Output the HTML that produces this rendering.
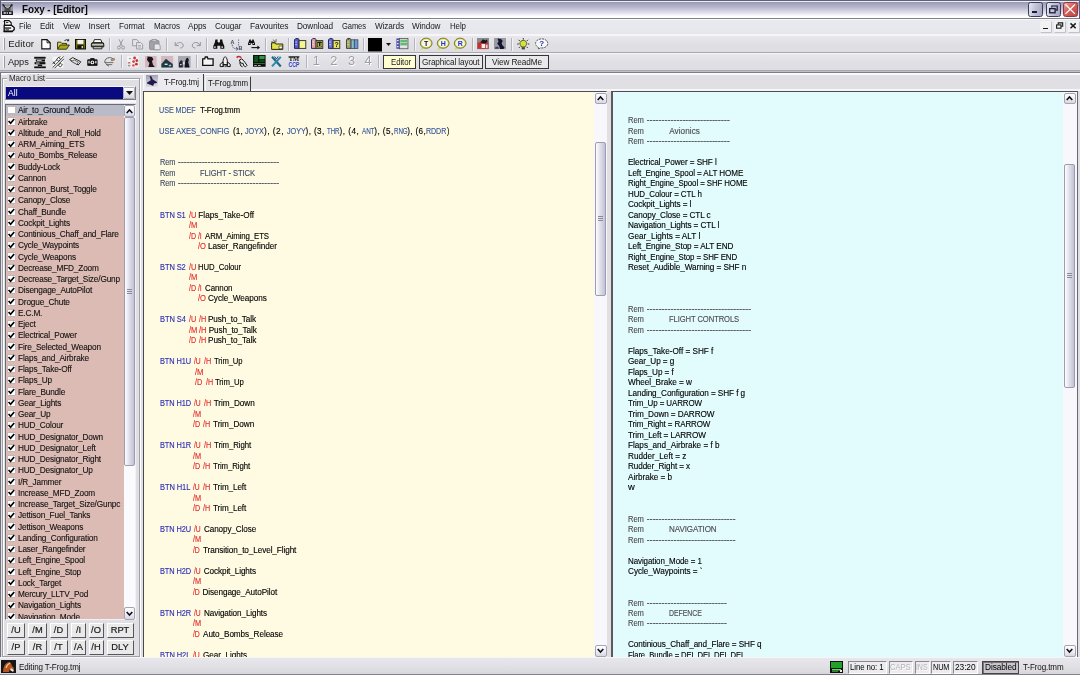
<!DOCTYPE html>
<html><head><meta charset="utf-8"><title>Foxy - [Editor]</title><style>
html,body{margin:0;padding:0}
body{width:1080px;height:675px;position:relative;overflow:hidden;background:#e0dfe3;will-change:transform;
 font-family:"Liberation Sans",sans-serif;font-size:8.25px;color:#000}
div{position:absolute;box-sizing:border-box;white-space:pre}
svg{position:absolute;overflow:visible}
.t{line-height:11px;height:11px}
.m{font-size:8.6px;line-height:11px;color:#1a1a1a}
.li{font-size:8.25px;line-height:11.25px;height:11.25px;left:18px;color:#111;letter-spacing:-0.16px;-webkit-text-stroke:0.1px}
.cb{left:7px;width:8.8px;height:8.3px;background:#fff;border:1px solid #c4b4b4;border-radius:1px}
.ed{font-size:8.2px;line-height:10.5px;height:10.5px;-webkit-text-stroke:0.12px}
.b{color:#2a2cb8}.u{color:#36569c}.r{color:#e22828}.g{color:#3e4a62}.g2{color:#4c4a50}.ds{-webkit-text-stroke:0.25px}
  .btn{background:#e9e9ea;border:1px solid #fff;border-right:1.5px solid #56565c;border-bottom:1.5px solid #56565c;
 font-size:9.3px;line-height:12.5px;text-align:center;color:#1a1a1a;-webkit-text-stroke:0.2px}
.sep{width:1px;background:#b4b4bc;border-right:1px solid #f4f4f6;height:13px;box-sizing:content-box}
</style></head>
<body>
<div style="left:0px;top:0px;width:1080px;height:19.4px;background:linear-gradient(#606078 0px,#606078 0.8px,#eeeefa 1.1px,#eeeefa 1.9px,#9a9ab2 2.5px,#a6a6be 4px,#b4b4cc 7px,#cbcbdc 10px,#e2e2ec 13px,#f8f8fb 15.5px,#ffffff 16.5px,#ffffff 17.6px,#808088 17.9px,#808088 19.4px)"></div>
<div style="left:0px;top:0px;width:0.9px;height:19px;background:#5c5c70"></div>
<svg style="left:1.8px;top:3.6px" width="11" height="11" viewBox="0 0 11 11"><rect width="11" height="11" fill="#92929a"></rect><path d="M0.6 0.4l3.6 3.8M10.4 0.4l-3.6 3.8" stroke="#2a2a2e" stroke-width="1.6"></path><path d="M3 2.2l2.500 1.600 2.500-1.600" stroke="#d8d8dc" stroke-width="0.800" fill="none"></path><rect x="2.600" y="4" width="5.800" height="3.400" fill="#4a4a50"></rect><rect x="0" y="7.200" width="11" height="3.800" fill="#1e1e22"></rect><rect x="1.600" y="8.200" width="2.200" height="1.600" fill="#e0e0e4"></rect><rect x="4.600" y="8.200" width="1.400" height="1.600" fill="#c8c8cc"></rect><rect x="7" y="8.200" width="2.400" height="1.600" fill="#e0e0e4"></rect></svg>
<div class="t" style="left: 21.9px; top: 3.1px; font-weight: bold; font-size: 10.2px; line-height: 13px; color: rgb(10, 10, 10); letter-spacing: -0.1px; transform: scaleX(0.9712); transform-origin: 0px 0px;">Foxy - [Editor]</div>
<div style="left:1028.4px;top:2px;width:15px;height:14.6px;border:1px solid #3c3c5c;border-radius:2.5px;background:linear-gradient(100deg,#e6e6f0,#c4c4d8 45%,#a4a4c2)"></div>
<div style="left:1032.1px;top:11px;width:5.2px;height:2.2px;background:#1c1c38"></div>
<div style="left:1045.6px;top:2px;width:15px;height:14.6px;border:1px solid #3c3c5c;border-radius:2.5px;background:linear-gradient(100deg,#e6e6f0,#c4c4d8 45%,#a4a4c2)"></div>
<svg style="left:1048.6px;top:4.6px" width="9" height="8.6" viewBox="0 0 9 8.600"><path d="M2.800 2.600v-1.600h5.400v4.200h-1.800" fill="none" stroke="#1c1c38" stroke-width="1.200"></path><rect x="0.700" y="3.600" width="5.400" height="4.200" fill="none" stroke="#1c1c38" stroke-width="1.300"></rect></svg>
<div style="left:1063px;top:2px;width:15px;height:14.6px;border:1px solid #8a3a44;border-radius:2.5px;background:linear-gradient(135deg,#f0a49c,#d8645c 40%,#bc4444)"></div>
<svg style="left:1065.4px;top:3.8px" width="10.400" height="10.400" viewBox="0 0 10.400 10.400"><path d="M0.500 0.500l9.400 9.400M9.900 0.500l-9.400 9.400" stroke="#fff" stroke-width="1.300"></path></svg>
<div style="left:1078.6px;top:0px;width:1.4px;height:19px;background:#705878"></div>
<div style="left:0px;top:19.4px;width:1080px;height:15.6px;background:linear-gradient(#e9e9f0,#e6e6ec);border-top:1px solid #fbfbfd;border-bottom:1px solid #f6f6f8"></div>
<svg style="left:3px;top:20.400px" width="12" height="12.400" viewBox="0 0 12 12.400"><path d="M1.600 0.600h4.400l2.200 2.200v2.600h-6.600z" fill="#fff" stroke="#0c0c0c" stroke-width="1.100"></path><path d="M0.600 1.600l1.600 1.200M3 2.600h2.400" stroke="#0c0c0c" stroke-width="0.900"></path><path d="M1.200 5.400h7.400l2.600 2.200v2l-2 1.800h-8z" fill="#fff" stroke="#0c0c0c" stroke-width="1.300"></path><rect x="1.600" y="7.400" width="6.600" height="1.300" fill="#0c0c0c"></rect><rect x="0.600" y="10.600" width="9" height="1.700" fill="#0c0c0c"></rect><rect x="2.400" y="9.400" width="3.600" height="0.900" fill="#0c0c0c"></rect></svg>
<div class="t m" style="left: 19px; top: 21px; letter-spacing: -0.1px; transform: scaleX(0.9213); transform-origin: 0px 0px;">File</div>
<div class="t m" style="left: 40px; top: 21px; letter-spacing: -0.1px; transform: scaleX(0.9506); transform-origin: 0px 0px;">Edit</div>
<div class="t m" style="left: 62.5px; top: 21px; letter-spacing: -0.1px; transform: scaleX(0.9345); transform-origin: 0px 0px;">View</div>
<div class="t m" style="left: 88.5px; top: 21px; letter-spacing: -0.017px;">Insert</div>
<div class="t m" style="left: 119px; top: 21px; letter-spacing: -0.1px; transform: scaleX(0.9542); transform-origin: 0px 0px;">Format</div>
<div class="t m" style="left: 153.5px; top: 21px; letter-spacing: -0.1px; transform: scaleX(0.9388); transform-origin: 0px 0px;">Macros</div>
<div class="t m" style="left: 188px; top: 21px; letter-spacing: -0.1px; transform: scaleX(0.9586); transform-origin: 0px 0px;">Apps</div>
<div class="t m" style="left: 215px; top: 21px; letter-spacing: -0.1px; transform: scaleX(0.957); transform-origin: 0px 0px;">Cougar</div>
<div class="t m" style="left: 250px; top: 21px; letter-spacing: -0.1px; transform: scaleX(0.9815); transform-origin: 0px 0px;">Favourites</div>
<div class="t m" style="left: 297px; top: 21px; letter-spacing: -0.1px; transform: scaleX(0.9594); transform-origin: 0px 0px;">Download</div>
<div class="t m" style="left: 341.5px; top: 21px; letter-spacing: -0.1px; transform: scaleX(0.8786); transform-origin: 0px 0px;">Games</div>
<div class="t m" style="left: 374.5px; top: 21px; letter-spacing: -0.1px; transform: scaleX(0.9523); transform-origin: 0px 0px;">Wizards</div>
<div class="t m" style="left: 412px; top: 21px; letter-spacing: -0.1px; transform: scaleX(0.9474); transform-origin: 0px 0px;">Window</div>
<div class="t m" style="left: 449.5px; top: 21px; letter-spacing: -0.1px; transform: scaleX(0.9197); transform-origin: 0px 0px;">Help</div>
<div style="left:1039.7px;top:20.8px;width:11.2px;height:11.6px;background:#f2f2f4;box-shadow:0.8px 0.8px 0 #b8b8c0"></div>
<div style="left:1053.8px;top:20.8px;width:11.2px;height:11.6px;background:#f2f2f4;box-shadow:0.8px 0.8px 0 #b8b8c0"></div>
<div style="left:1067.6px;top:20.8px;width:11.2px;height:11.6px;background:#f2f2f4;box-shadow:0.8px 0.8px 0 #b8b8c0"></div>
<div style="left:1043px;top:27.8px;width:4.9px;height:1.3px;background:#1a1a1a"></div>
<svg style="left:1055.6px;top:22.4px" width="7.400" height="6.800" viewBox="0 0 7.400 6.800"><path d="M2.200 2.400v-1.500h4.500v3.400h-1.500" fill="none" stroke="#1a1a1a" stroke-width="1.100"></path><rect x="0.600" y="2.900" width="4.400" height="3.300" fill="none" stroke="#1a1a1a" stroke-width="1.100"></rect></svg>
<svg style="left:1070px;top:23.2px" width="6.200" height="5.600" viewBox="0 0 6.200 5.600"><path d="M0.500 0.400l5.200 4.800M5.700 0.400l-5.200 4.800" stroke="#1a1a1a" stroke-width="1.500"></path></svg>
<div style="left:0px;top:35px;width:1080px;height:17.5px;background:linear-gradient(#e8e8ec,#e1e1e5 45%,#dedee2);border-top:1px solid #f6f6f8;border-bottom:1px solid #a8a8b0"></div>
<div style="left:3px;top:38px;width:2px;height:11.5px;background:#f8f8f8;border-right:1px solid #9a9aa4"></div>
<div style="left:0px;top:52.5px;width:1080px;height:18px;background:linear-gradient(#e8e8ec,#e1e1e5 45%,#dedee2);border-top:1px solid #f6f6f8;border-bottom:1px solid #a8a8b0"></div>
<div style="left:3px;top:55.5px;width:2px;height:12px;background:#f8f8f8;border-right:1px solid #9a9aa4"></div>
<div style="left:0px;top:70.6px;width:1080px;height:1px;background:#c0c0c8"></div>
<div style="left:0px;top:71.8px;width:1080px;height:1.4px;background:#7e7e86"></div>
<div style="left:0px;top:73.2px;width:1080px;height:1.4px;background:#fafafc"></div>
<div class="t" style="left: 8.3px; top: 37.8px; font-size: 9.6px; line-height: 12px; color: rgb(34, 34, 34); letter-spacing: 0.14px;">Editor</div>
<div class="t" style="left: 8.3px; top: 55.8px; font-size: 9.6px; line-height: 12px; color: rgb(34, 34, 34); letter-spacing: -0.1px; transform: scaleX(0.9639); transform-origin: 0px 0px;">Apps</div>
<svg style="left:41px;top:39px" width="10" height="10.5" viewBox="0 0 10 10.5"><path d="M0.8 0.6h5.2l3.2 3.2v6.1h-8.4z" fill="#fff" stroke="#111" stroke-width="1.1"></path><path d="M6 0.6v3.2h3.2" fill="none" stroke="#111" stroke-width="0.9"></path></svg>
<svg style="left:57px;top:38.5px" width="13" height="11" viewBox="0 0 13 11"><path d="M0.6 10.2v-7h3.2l1 1.2h4.7v1.8" fill="#d8d860" stroke="#3a3a10" stroke-width="1"></path><path d="M0.6 10.2l2.6-4.2h9.2l-2.8 4.2z" fill="#a8a818" stroke="#3a3a10" stroke-width="1"></path><path d="M7.5 2c1-1.5 2.5-1.7 3.8-0.6M11.6 0.2v1.6h-1.6" fill="none" stroke="#111" stroke-width="0.9"></path></svg>
<svg style="left:75px;top:39px" width="11" height="10.5" viewBox="0 0 11 10.5"><rect x="0.5" y="0.5" width="10" height="9.5" fill="#6e6e08" stroke="#111" stroke-width="1"></rect><rect x="2.4" y="0.9" width="6" height="4" fill="#f4f4f4"></rect><rect x="2.4" y="6.2" width="6.2" height="3.6" fill="#111"></rect><rect x="6.6" y="7" width="1.3" height="2.2" fill="#e8e8e8"></rect></svg>
<svg style="left:91px;top:39px" width="13.2" height="10.5" viewBox="0 0 13.2 10.5"><path d="M3.4 0.6h6.4l1.2 3.2h-8.8z" fill="#fff" stroke="#111" stroke-width="0.9"></path><path d="M1 3.8h11.2l0.6 1.4v2.6h-12.4v-2.6z" fill="#7c7c72" stroke="#111" stroke-width="1"></path><rect x="1.2" y="5.2" width="10.8" height="1" fill="#d8d8c0"></rect><path d="M2.2 7.8h8.8v2h-8.8z" fill="#f0f0e8" stroke="#111" stroke-width="0.9"></path></svg>
<svg style="left:116.5px;top:39px" width="8" height="10.8" viewBox="0 0 8 10.8"><path d="M2 0.3l3.4 7M6 0.3l-3.4 7" stroke="#9494a0" stroke-width="0.9" fill="none"></path><circle cx="1.9" cy="8.6" r="1.5" fill="none" stroke="#9494a0" stroke-width="0.9"></circle><circle cx="6.1" cy="8.6" r="1.5" fill="none" stroke="#9494a0" stroke-width="0.9"></circle></svg>
<svg style="left:132px;top:39px" width="11.5" height="10.5" viewBox="0 0 11.5 10.5"><path d="M0.6 0.6h4.2l1.6 1.6v4.6h-5.8z" fill="#e6e6ea" stroke="#9494a0" stroke-width="0.9"></path><path d="M4.6 3.6h4.2l1.8 1.8v4.6h-6z" fill="#e6e6ea" stroke="#9494a0" stroke-width="0.9"></path><path d="M6 6.5h3M6 8h3" stroke="#9494a0" stroke-width="0.7"></path></svg>
<svg style="left:149px;top:38.5px" width="12" height="11.5" viewBox="0 0 12 11.5"><rect x="0.6" y="1.6" width="9.4" height="9" rx="0.8" fill="#a2a2aa" stroke="#8a8a94" stroke-width="0.9"></rect><rect x="3" y="0.4" width="4.6" height="2.4" fill="#c4c4cc" stroke="#8a8a94" stroke-width="0.7"></rect><path d="M5.2 5h4.2l1.8 1.6v4.2h-6z" fill="#e8e8ec" stroke="#8a8a94" stroke-width="0.8"></path></svg>
<svg style="left:173.5px;top:40.5px" width="10.5" height="7.5" viewBox="0 0 10.5 7.5"><path d="M1.2 1v3.6h3.6" fill="none" stroke="#9494a0" stroke-width="1"></path><path d="M1.6 4.2c1.6-3.4 6.6-3.6 7.6-0.2c0.4 1.8-1 3-3 3" fill="none" stroke="#9494a0" stroke-width="1"></path></svg>
<svg style="left:190.5px;top:40.5px" width="10.5" height="7.5" viewBox="0 0 10.5 7.5"><path d="M9.3 1v3.6h-3.6" fill="none" stroke="#9494a0" stroke-width="1"></path><path d="M8.9 4.2c-1.6-3.4-6.6-3.6-7.6-0.2c-0.4 1.8 1 3 3 3" fill="none" stroke="#9494a0" stroke-width="1"></path></svg>
<svg style="left:213px;top:38.5px" width="11.6" height="10.2" viewBox="0 0 11.6 10.2"><path d="M2.4 0.6h2.2v2.2l0.7 0.8h1l0.7-0.8v-2.2h2.2l0.6 3 1.5 3.4v2.8h-4v-3h-3v3h-4v-2.8l1.5-3.4z" fill="#111"></path><rect x="1.1" y="7.4" width="1.6" height="1.4" fill="#e8e8e8"></rect><rect x="8.4" y="7.4" width="1.6" height="1.4" fill="#e8e8e8"></rect></svg>
<svg style="left:229.5px;top:38.5px" width="13" height="11.5" viewBox="0 0 13 11.5"><text x="0.6" y="4.6" font-family="Liberation Sans,sans-serif" font-size="5.4" font-weight="bold" fill="#3a4660">A</text><text x="8.6" y="11" font-family="Liberation Sans,sans-serif" font-size="5.4" font-weight="bold" fill="#3a4660">B</text><path d="M2.2 5.6c0 3 1.6 4.2 5 4.2" fill="none" stroke="#3a4660" stroke-width="0.9" stroke-dasharray="1.1 0.9"></path><path d="M6.2 8.2l1.9 1.6-1.9 1.5" fill="none" stroke="#3a4660" stroke-width="0.9"></path><path d="M8.6 0.6v1M8.6 3.2v3.6" stroke="#3a4660" stroke-width="1" stroke-dasharray="1 1.2"></path></svg>
<svg style="left:247.5px;top:39px" width="12.5" height="10.5" viewBox="0 0 12.5 10.5"><path d="M1.4 0.4h1.4v1.4h1.4v-1.4h1.4l0.6 2 0.8 2v1.6h-2.6v-1.8h-1.8v1.8h-2.6v-1.6l0.8-2z" fill="#111"></path><rect x="0.9" y="4" width="1" height="0.9" fill="#ddd"></rect><rect x="5" y="4" width="1" height="0.9" fill="#ddd"></rect><path d="M3.4 8.6h7.6" stroke="#111" stroke-width="1.1"></path><path d="M9.4 6.6l2.6 2-2.6 2z" fill="#111"></path></svg>
<svg style="left:270.5px;top:38.5px" width="12.5" height="11.5" viewBox="0 0 12.5 11.5"><path d="M0.6 10.4v-6.6h3l1 1.2h7.2v5.4z" fill="#e2e24a" stroke="#2a2a10" stroke-width="1"></path><path d="M2.2 0.6l2.4 3M5.2 0.2l-0.4 3.2M0.4 2.6l3.6 1.2" stroke="#2a2a10" stroke-width="0.7"></path><rect x="8" y="7" width="3.2" height="2.8" fill="#fafafa" stroke="#2a2a10" stroke-width="0.6"></rect></svg>
<svg style="left:294px;top:38.4px" width="12.4" height="11" viewBox="0 0 12.4 11"><path d="M0.5 1.8l1.2-1.2h2.6l0.8 1.2v8.6h-4.6z" fill="#5a5ad0" stroke="#1a1a4a" stroke-width="0.9"></path><rect x="1.4" y="3.4" width="1.4" height="1.2" fill="#e8e8f8" opacity="0.8"></rect><rect x="1.4" y="6" width="1.4" height="1.2" fill="#e8e8f8" opacity="0.8"></rect><rect x="5.1" y="2.6" width="6.7" height="7.8" fill="#f6f690" stroke="#2a2a2a" stroke-width="0.9"></rect></svg>
<svg style="left:311px;top:38.4px" width="12.4" height="11" viewBox="0 0 12.4 11"><path d="M0.5 1.8l1.2-1.2h2.6l0.8 1.2v8.6h-4.6z" fill="#e4a2a6" stroke="#1a1a4a" stroke-width="0.9"></path><rect x="1.4" y="3.4" width="1.4" height="1.2" fill="#e8e8f8" opacity="0.8"></rect><rect x="1.4" y="6" width="1.4" height="1.2" fill="#e8e8f8" opacity="0.8"></rect><rect x="5.1" y="2.6" width="6.7" height="7.8" fill="#d8d858" stroke="#2a2a2a" stroke-width="0.9"></rect><rect x="6.2" y="3.6" width="4.6" height="5.8" fill="#1a1a1a"></rect><text x="6.6" y="8.8" font-family="Liberation Sans,sans-serif" font-size="6" font-weight="bold" fill="#e8e85a">U</text></svg>
<svg style="left:328.2px;top:38.4px" width="12.4" height="11" viewBox="0 0 12.4 11"><path d="M0.5 1.8l1.2-1.2h2.6l0.8 1.2v8.6h-4.6z" fill="#6a70d8" stroke="#1a1a4a" stroke-width="0.9"></path><rect x="1.4" y="3.4" width="1.4" height="1.2" fill="#e8e8f8" opacity="0.8"></rect><rect x="1.4" y="6" width="1.4" height="1.2" fill="#e8e8f8" opacity="0.8"></rect><rect x="5.1" y="2.6" width="6.7" height="7.8" fill="#e8e860" stroke="#2a2a2a" stroke-width="0.9"></rect><text x="6.6" y="9.2" font-family="Liberation Sans,sans-serif" font-size="7" font-weight="bold" fill="#1a1a1a">?</text></svg>
<svg style="left:345.6px;top:38.4px" width="12.6" height="11" viewBox="0 0 12.6 11"><path d="M0.5 1.8l1.2-1.2h2.6l0.8 1.2v8.6h-4.6z" fill="#a4a474" stroke="#3a3a2a" stroke-width="0.9"></path><rect x="1.6" y="0" width="1.6" height="1.6" fill="#333"></rect><rect x="1.4" y="3.4" width="1.4" height="1.2" fill="#e0d8a0"></rect><rect x="1.4" y="6" width="1.4" height="1.2" fill="#e0d8a0"></rect><rect x="5.1" y="1.8" width="3.2" height="8.6" fill="#8cc0c8" stroke="#3a4a5a" stroke-width="0.8"></rect><rect x="8.3" y="1.8" width="3.6" height="8.6" fill="#6a9ad8" stroke="#3a4a5a" stroke-width="0.8"></rect></svg>
<svg style="left:368px;top:37.5px" width="14" height="13.5" viewBox="0 0 14 13.5"><rect width="14" height="13.5" fill="#000"></rect></svg>
<svg style="left:386px;top:43px" width="5" height="3" viewBox="0 0 5 3"><path d="M0 0h5l-2.5 3z" fill="#111"></path></svg>
<svg style="left:396px;top:38.4px" width="12.4" height="11.2" viewBox="0 0 12.4 11.2"><rect x="0.4" y="0.4" width="3" height="10.4" fill="#4a4ac0"></rect><rect x="1" y="2" width="1.6" height="1.2" fill="#e8e8ff"></rect><rect x="1" y="5" width="1.6" height="1.2" fill="#e8e8ff"></rect><rect x="1" y="8" width="1.6" height="1.2" fill="#e8e8ff"></rect><rect x="3.4" y="0.4" width="8.6" height="10.4" fill="#d0d0d0" stroke="#444" stroke-width="0.7"></rect><rect x="4.4" y="2" width="6.6" height="2.2" fill="#58c070"></rect><rect x="4.4" y="5" width="6.6" height="2.2" fill="#58c070"></rect><rect x="4.4" y="8" width="6.6" height="1.8" fill="#e8e8e8"></rect></svg>
<svg style="left:419.6px;top:38px" width="12.4" height="12" viewBox="0 0 12.4 12"><ellipse cx="6.2" cy="5.2" rx="5.4" ry="4.6" fill="#f4f4f0" stroke="#d8d020" stroke-width="1.2"></ellipse><path d="M2.6 8.6l-1.2 2.8 3-1.6" fill="#f4f4f0" stroke="#d8d020" stroke-width="0.9"></path><ellipse cx="6.2" cy="5.2" rx="5.9" ry="5.1" fill="none" stroke="#222" stroke-width="0.5"></ellipse><text x="6.2" y="7.7" text-anchor="middle" font-family="Liberation Sans,sans-serif" font-size="7" font-weight="bold" fill="#111">T</text></svg>
<svg style="left:437px;top:38px" width="12.4" height="12" viewBox="0 0 12.4 12"><ellipse cx="6.2" cy="5.2" rx="5.4" ry="4.6" fill="#f4f4f0" stroke="#d8d020" stroke-width="1.2"></ellipse><path d="M2.6 8.6l-1.2 2.8 3-1.6" fill="#f4f4f0" stroke="#d8d020" stroke-width="0.9"></path><ellipse cx="6.2" cy="5.2" rx="5.9" ry="5.1" fill="none" stroke="#222" stroke-width="0.5"></ellipse><text x="6.2" y="7.7" text-anchor="middle" font-family="Liberation Sans,sans-serif" font-size="7" font-weight="bold" fill="#2038b0">H</text></svg>
<svg style="left:454px;top:38px" width="12.4" height="12" viewBox="0 0 12.4 12"><ellipse cx="6.2" cy="5.2" rx="5.4" ry="4.6" fill="#f4f4f0" stroke="#d8d020" stroke-width="1.2"></ellipse><path d="M2.6 8.6l-1.2 2.8 3-1.6" fill="#f4f4f0" stroke="#d8d020" stroke-width="0.9"></path><ellipse cx="6.2" cy="5.2" rx="5.9" ry="5.1" fill="none" stroke="#222" stroke-width="0.5"></ellipse><text x="6.2" y="7.7" text-anchor="middle" font-family="Liberation Sans,sans-serif" font-size="7" font-weight="bold" fill="#2038b0">R</text></svg>
<svg style="left:477px;top:38.3px" width="12" height="11.2" viewBox="0 0 12 11.2"><rect width="12" height="11.2" fill="#8a8a92"></rect><path d="M0.6 4.4h10.8v6.4h-10.8z" fill="#c83030"></path><path d="M3 4.6l3-3.4 2.6 1.2 1.4-1.2 0.6 2.6-2.2 1.6z" fill="#1a1a1a"></path><rect x="4.6" y="6" width="3.6" height="4" fill="#f4f0f0"></rect><rect x="9" y="6.6" width="1.6" height="3.6" fill="#f0d8d8"></rect></svg>
<svg style="left:494.3px;top:38.3px" width="12" height="11.2" viewBox="0 0 12 11.2"><rect width="12" height="11.2" fill="#9a9aa4"></rect><path d="M3.4 0.6l3.6 0.4 1.8 2-1.2 2 0.6 2 2.4 2.4-1.2 1.6h-3.4l-0.8-3-2-2.4 1.4-2.2z" fill="#14142c"></path><path d="M1 9.4l3-1 1 2.4h-4z" fill="#3a3a5a"></path></svg>
<svg style="left:517px;top:38px" width="12.6" height="12" viewBox="0 0 12.6 12"><path d="M6.3 0v1.6M1.6 1.8l1.3 1.3M11 1.8l-1.3 1.3M0.2 6h1.6M12.4 6h-1.6M1.8 10l1.2-1.2M10.8 10l-1.2-1.2" stroke="#222" stroke-width="0.9"></path><path d="M6.3 2.4c2.2 0 3.4 1.5 3.4 3.1c0 1.5-1.4 2.2-1.6 3.5h-3.6c-0.2-1.3-1.6-2-1.6-3.5c0-1.6 1.2-3.1 3.4-3.1z" fill="#d6e23a" stroke="#3a3a10" stroke-width="0.8"></path><rect x="4.7" y="9.2" width="3.2" height="2.2" fill="#444"></rect></svg>
<svg style="left:534.5px;top:38px" width="13.4" height="12" viewBox="0 0 13.4 12"><path d="M6.8 0.8c3.4 0 6 2 6 4.6c0 2.6-2.6 4.6-6 4.6c-0.6 0-1.2 0-1.8-0.2l-1.4 1.6-0.4-2.2c-1.6-0.8-2.6-2.2-2.6-3.8c0-2.6 2.8-4.6 6.2-4.600z" fill="#f8f8f8" stroke="#555" stroke-width="1" stroke-dasharray="2.2 0.8"></path><text x="6.8" y="8.2" text-anchor="middle" font-family="Liberation Sans,sans-serif" font-size="8" font-weight="bold" fill="#2030b0">?</text></svg>
<svg style="left:34.4px;top:55.8px" width="12" height="12.4" viewBox="0 0 12 12.4"><rect x="0.2" y="0.8" width="11.4" height="1.9" fill="#111"></rect><rect x="1.800" y="3.400" width="9.200" height="2.200" fill="#111"></rect><rect x="3" y="3.900" width="4.600" height="0.900" fill="#e8e8e8"></rect><rect x="0.600" y="6.100" width="10.800" height="2.200" fill="#111"></rect><rect x="2" y="6.700" width="3.600" height="0.800" fill="#e8e8e8"></rect><rect x="3.800" y="8.500" width="4.400" height="1.600" fill="#111"></rect><rect x="0.200" y="10.400" width="11.600" height="1.800" fill="#111"></rect></svg>
<svg style="left:52px;top:55.8px" width="12" height="12.4" viewBox="0 0 12 12.4"><rect x="0.600" y="0.600" width="10.800" height="11.200" fill="#f6f6f6"></rect><path d="M0.600 11.600l11-11M2.600 12.200l9.200-9.200M0.400 8.200l7.800-7.800" stroke="#111" stroke-width="0.800"></path><path d="M4.600 3.200l2-1.800 2 2-2 1.800zM6.400 9.200l2.200-2 1.800 1.800-2.200 2z" fill="#fff" stroke="#111" stroke-width="0.800"></path><path d="M1 5.600l2 2.400" stroke="#111" stroke-width="0.900"></path></svg>
<svg style="left:69px;top:56.8px" width="12.6" height="8.8" viewBox="0 0 12.6 8.8"><path d="M0.600 2.600l3.200-2 8 4.200-2.600 3.200z" fill="#f4f4f4" stroke="#111" stroke-width="0.9"></path><path d="M2.400 4.400l2.800-1.600 4.200 2.400-1.600 2.200z" fill="#dcdcdc" stroke="#111" stroke-width="0.6"></path></svg>
<svg style="left:87px;top:57.8px" width="10.8" height="8" viewBox="0 0 10.8 8"><path d="M0.700 1.800h2.200l0.800-1.300h3.400l0.800 1.300h2.200v5.600h-9.400z" fill="#111" stroke="#111" stroke-width="0.800"></path><circle cx="5.400" cy="4.400" r="1.900" fill="#f2f2f2"></circle><circle cx="5.400" cy="4.400" r="0.800" fill="#111"></circle><rect x="1.400" y="2.800" width="1.300" height="2.600" fill="#e0e0e0"></rect><rect x="8.200" y="2.800" width="1.300" height="2.600" fill="#e0e0e0"></rect></svg>
<svg style="left:104px;top:56.2px" width="10.8" height="10.5" viewBox="0 0 10.8 10.5"><path d="M0.600 6.600c0-3 2.200-5 5-5c1.600 0 2.800 0.600 3.600 1.600" fill="none" stroke="#555" stroke-width="0.900"></path><path d="M1 6.600h8.400M2.600 8.600h5.600M1.600 6.600c0.400 2 1.600 3.200 3.600 3.400" fill="none" stroke="#555" stroke-width="0.800"></path><path d="M7 3.400l3.200-1.200 0.400 1.800-3 1z" fill="#e89038" stroke="#555" stroke-width="0.500"></path></svg>
<svg style="left:127.3px;top:55.6px" width="11.6" height="11.4" viewBox="0 0 11.6 11.4"><rect width="11.600" height="11.400" fill="#f2f2f4"></rect><circle cx="7.600" cy="2" r="1.400" fill="#d03030"></circle><circle cx="9.800" cy="4.600" r="1.300" fill="#b82828"></circle><circle cx="6.600" cy="5.600" r="1.400" fill="#d84040"></circle><circle cx="9.400" cy="8.200" r="1.400" fill="#c83030"></circle><circle cx="6.400" cy="9.400" r="1.200" fill="#d84848"></circle><circle cx="3" cy="2.600" r="0.700" fill="#555"></circle><rect x="0.800" y="6" width="2.600" height="1.600" fill="#c87878"></rect><rect x="0.800" y="8.800" width="2.600" height="1.600" fill="#a09090"></rect></svg>
<svg style="left:144.6px;top:55.6px" width="11.6" height="11.4" viewBox="0 0 11.6 11.4"><rect width="11.600" height="11.400" fill="#d8b4bc"></rect><path d="M2.600 0.600l4.400 0.400 1.400 2.200-1.400 2 1 3.600 1.800 2.200h-6.400l1-4-2.400-3z" fill="#16161e"></path></svg>
<svg style="left:160.8px;top:55.6px" width="12.2" height="11.4" viewBox="0 0 12.2 11.4"><rect width="12.200" height="11.400" fill="#d4b8c0"></rect><path d="M0.400 11.400v-3.400l4.600-5.200 3 2.400 3.800 2.800v3.400z" fill="#1c3a44"></path><path d="M3.600 7.600h3v1.400h-3z" fill="#d8e4e4"></path><path d="M7.600 9l2.400-0.600 0.400 1.600-2.400 0.400z" fill="#9ac0c0"></path></svg>
<svg style="left:178px;top:55.6px" width="12.6" height="11.4" viewBox="0 0 12.6 11.4"><rect width="12.600" height="11.400" fill="#a8a8b0"></rect><path d="M1 11.400v-5l2.200-2.400 1.600 1.400v6z" fill="#1e2a3a"></path><path d="M6.600 11.400l0.600-6.400 1.200-2.800 1.400-0.400 1 2-0.600 2.400 1.400 5.200z" fill="#14141e"></path><rect x="4.800" y="6" width="1.800" height="2.400" fill="#e0e4e8"></rect><rect x="2" y="8" width="1.600" height="1.200" fill="#c8d0d8"></rect></svg>
<svg style="left:202px;top:56.2px" width="11.8" height="10" viewBox="0 0 11.8 10"><path d="M0.700 9.400v-6.600h2l0.600-1.800h2l0.600 1.800h5.200v6.600z" fill="#f4f4f4" stroke="#111" stroke-width="1.300"></path></svg>
<svg style="left:218.8px;top:55.6px" width="12.4" height="11.4" viewBox="0 0 12.4 11.4"><path d="M6.200 0.600c1.600 1.200 2.200 3 2.200 5.400v2.600h-4.400v-2.600c0-2.400 0.600-4.200 2.200-5.400z" fill="#f0f0f0" stroke="#111" stroke-width="1"></path><path d="M4 6l-2.800 2.200v2.400h2.800zM8.400 6l2.800 2.200v2.400h-2.800z" fill="#f0f0f0" stroke="#111" stroke-width="1"></path><path d="M4.600 9v2M7.800 9v2M6.200 8.600v2.600" stroke="#111" stroke-width="0.800"></path></svg>
<svg style="left:236.4px;top:55.6px" width="11.8" height="11.4" viewBox="0 0 11.8 11.4"><path d="M0.600 1.600c1.400-1.400 3.400-1.400 4.600 0.200" fill="none" stroke="#c82828" stroke-width="1.600"></path><path d="M3.400 4l2.400-1.200 3 3.400 2.200 3.200-1.400 1.400-2-1.200-0.400-2.200-2.600-0.400z" fill="#f4f4f4" stroke="#111" stroke-width="1"></path><path d="M3.600 6.400l1.200 3.600 1.800 0.800" fill="none" stroke="#111" stroke-width="0.900"></path></svg>
<svg style="left:253px;top:55.4px" width="12.6" height="11.8" viewBox="0 0 12.6 11.8"><rect width="12.6" height="11.8" fill="#0c120c"></rect><rect x="1.2" y="1" width="3.8" height="6" fill="#12501c"></rect><rect x="6.4" y="1" width="5.200" height="3.200" fill="#2c9c3e"></rect><rect x="6.400" y="5" width="5.200" height="2" fill="#10481a"></rect><rect x="0.800" y="8.300" width="11" height="0.700" fill="#3a9a44"></rect><rect x="1.200" y="10" width="2.600" height="1" fill="#a8b0a8"></rect><rect x="5" y="10" width="2.600" height="1" fill="#a8b0a8"></rect></svg>
<svg style="left:271.4px;top:55.8px" width="10.8" height="11" viewBox="0 0 10.8 11"><path d="M1 0.800l8.800 9.600" stroke="#1a6a8a" stroke-width="2.200"></path><path d="M9.800 0.800l-8.800 9.600" stroke="#2a8aa8" stroke-width="2"></path><path d="M3.600 0.400l1.800 2.600 1.800-2.600" fill="none" stroke="#0e3a4a" stroke-width="0.900"></path></svg>
<svg style="left:288.3px;top:55.6px" width="12" height="11.4" viewBox="0 0 12 11.4"><text x="6" y="4.600" text-anchor="middle" font-family="Liberation Serif,serif" font-size="5.800" font-weight="bold" fill="#111" textLength="10.500" lengthAdjust="spacingAndGlyphs">TM</text><rect x="0.600" y="0.300" width="10.800" height="1.100" fill="#111"></rect><text x="6" y="10.800" text-anchor="middle" font-family="Liberation Sans,sans-serif" font-size="6.400" font-weight="bold" fill="#2840c8" textLength="11" lengthAdjust="spacingAndGlyphs">CCP</text></svg>

<div class="sep" style="left:109px;top:38px"></div>
<div class="sep" style="left:166px;top:38px"></div>
<div class="sep" style="left:206px;top:38px"></div>
<div class="sep" style="left:265px;top:38px"></div>
<div class="sep" style="left:288px;top:38px"></div>
<div class="sep" style="left:363px;top:38px"></div>
<div class="sep" style="left:414px;top:38px"></div>
<div class="sep" style="left:472px;top:38px"></div>
<div class="sep" style="left:511px;top:38px"></div>
<div class="sep" style="left:121px;top:55px"></div>
<div class="sep" style="left:196px;top:55px"></div>
<div class="sep" style="left:306px;top:55px"></div>
<div class="sep" style="left:378px;top:55px"></div>
<div class="t" style="left:312.8px;top:54.4px;font-size:12.8px;line-height:14px;color:#9e9ea4;text-shadow:0.8px 0.8px 0 #fff">1</div>
<div class="t" style="left:330.3px;top:54.4px;font-size:12.8px;line-height:14px;color:#9e9ea4;text-shadow:0.8px 0.8px 0 #fff">2</div>
<div class="t" style="left:347.9px;top:54.4px;font-size:12.8px;line-height:14px;color:#9e9ea4;text-shadow:0.8px 0.8px 0 #fff">3</div>
<div class="t" style="left:364.4px;top:54.4px;font-size:12.8px;line-height:14px;color:#9e9ea4;text-shadow:0.8px 0.8px 0 #fff">4</div>
<div style="left:383px;top:54.9px;width:33.4px;height:14.5px;background:#ffffd2;border:1px solid #35353a;border-right-width:1.3px;border-bottom-width:1.3px"></div>
<div class="t" style="left: 390.8px; top: 56.6px; font-size: 8.7px; line-height: 11px; color: rgb(26, 26, 26); letter-spacing: -0.1px; transform: scaleX(0.9048); transform-origin: 0px 0px;">Editor</div>
<div style="left:419.2px;top:54.9px;width:63.4px;height:14.5px;background:#e9e9ec;border:1px solid #35353a;border-right-width:1.3px;border-bottom-width:1.3px"></div>
<div class="t" style="left: 421.7px; top: 56.6px; font-size: 8.7px; line-height: 11px; color: rgb(26, 26, 26); letter-spacing: -0.1px; transform: scaleX(0.9398); transform-origin: 0px 0px;">Graphical layout</div>
<div style="left:485px;top:54.9px;width:64.3px;height:14.5px;background:#e9e9ec;border:1px solid #35353a;border-right-width:1.3px;border-bottom-width:1.3px"></div>
<div class="t" style="left: 491.7px; top: 56.6px; font-size: 8.7px; line-height: 11px; color: rgb(26, 26, 26); letter-spacing: -0.1px; transform: scaleX(0.9463); transform-origin: 0px 0px;">View ReadMe</div>
<div style="left:0px;top:72.5px;width:1px;height:585px;background:#70707a"></div>
<div style="left:2px;top:77.5px;width:138px;height:579.5px;border:1px solid #a0a0a8;box-shadow:1px 1px 0 #fff, inset 1px 1px 0 #fff"></div>
<div style="left:7px;top:74px;width:39px;height:8px;background:#e0dfe3"></div>
<div class="t" style="left: 8.6px; top: 72.3px; font-size: 9px; line-height: 12px; color: rgb(42, 42, 42); letter-spacing: -0.1px; transform: scaleX(0.8885); transform-origin: 0px 0px;">Macro List</div>
<div style="left:5px;top:99.8px;width:131.4px;height:3.6px;background:#f8f8fb"></div>
<div style="left:5px;top:85.6px;width:131.4px;height:14.4px;background:#fff;border:1px solid #7c7c86;border-top-color:#f4f4f8;border-left-color:#b4b4c0"></div>
<div style="left:6px;top:87px;width:117px;height:12px;background:#0a0a80"></div>
<div class="t" style="left:8px;top:88px;color:#fff;font-size:8.6px">All</div>
<div style="left:123px;top:87px;width:12px;height:12px;background:linear-gradient(#fdfdfd,#d8d8e0);border:1px solid #b0b0bc;border-radius:1px"></div>
<svg style="left:126px;top:91px" width="7" height="4" viewBox="0 0 7 4"><path d="M0 0h7l-3.5 4z" fill="#111"></path></svg>
<div style="left:5px;top:104px;width:131px;height:516.4px;background:#dbbbb3;border:1px solid #f2f2f6;border-left-color:#6a6a74;border-top-color:#6a6a74;overflow:hidden"></div>
<div style="left:124px;top:105px;width:11px;height:514px;background:#fbfbfd"></div>
<div style="left:6px;top:105px;width:118px;height:514px;overflow:hidden">
<div style="left:0px;top:0px;width:118px;height:11px;background:#b9bbc9"></div>
<div class="cb" style="left:1px;top:1.00px"></div>
<div class="li" style="left:12px;top:0.30px">Air_to_Ground_Mode</div>
<div class="cb" style="left:1px;top:12.25px"></div>
<svg style="left:2.3px;top:13.05px" width="7" height="7" viewBox="0 0 7 7"><path d="M0.6 3l2 2.2 3.6-4.2" fill="none" stroke="#000" stroke-width="1.7"></path></svg>
<div class="li" style="left:12px;top:11.55px">Airbrake</div>
<div class="cb" style="left:1px;top:23.50px"></div>
<svg style="left:2.3px;top:24.30px" width="7" height="7" viewBox="0 0 7 7"><path d="M0.6 3l2 2.2 3.6-4.2" fill="none" stroke="#000" stroke-width="1.7"></path></svg>
<div class="li" style="left:12px;top:22.80px">Altitude_and_Roll_Hold</div>
<div class="cb" style="left:1px;top:34.75px"></div>
<svg style="left:2.3px;top:35.55px" width="7" height="7" viewBox="0 0 7 7"><path d="M0.6 3l2 2.2 3.6-4.2" fill="none" stroke="#000" stroke-width="1.7"></path></svg>
<div class="li" style="left:12px;top:34.05px">ARM_Aiming_ETS</div>
<div class="cb" style="left:1px;top:46.00px"></div>
<svg style="left:2.3px;top:46.80px" width="7" height="7" viewBox="0 0 7 7"><path d="M0.6 3l2 2.2 3.6-4.2" fill="none" stroke="#000" stroke-width="1.7"></path></svg>
<div class="li" style="left:12px;top:45.30px">Auto_Bombs_Release</div>
<div class="cb" style="left:1px;top:57.25px"></div>
<svg style="left:2.3px;top:58.05px" width="7" height="7" viewBox="0 0 7 7"><path d="M0.6 3l2 2.2 3.6-4.2" fill="none" stroke="#000" stroke-width="1.7"></path></svg>
<div class="li" style="left:12px;top:56.55px">Buddy-Lock</div>
<div class="cb" style="left:1px;top:68.50px"></div>
<svg style="left:2.3px;top:69.30px" width="7" height="7" viewBox="0 0 7 7"><path d="M0.6 3l2 2.2 3.6-4.2" fill="none" stroke="#000" stroke-width="1.7"></path></svg>
<div class="li" style="left:12px;top:67.80px">Cannon</div>
<div class="cb" style="left:1px;top:79.75px"></div>
<svg style="left:2.3px;top:80.55px" width="7" height="7" viewBox="0 0 7 7"><path d="M0.6 3l2 2.2 3.6-4.2" fill="none" stroke="#000" stroke-width="1.7"></path></svg>
<div class="li" style="left:12px;top:79.05px">Cannon_Burst_Toggle</div>
<div class="cb" style="left:1px;top:91.00px"></div>
<svg style="left:2.3px;top:91.80px" width="7" height="7" viewBox="0 0 7 7"><path d="M0.6 3l2 2.2 3.6-4.2" fill="none" stroke="#000" stroke-width="1.7"></path></svg>
<div class="li" style="left:12px;top:90.30px">Canopy_Close</div>
<div class="cb" style="left:1px;top:102.25px"></div>
<svg style="left:2.3px;top:103.05px" width="7" height="7" viewBox="0 0 7 7"><path d="M0.6 3l2 2.2 3.6-4.2" fill="none" stroke="#000" stroke-width="1.7"></path></svg>
<div class="li" style="left:12px;top:101.55px">Chaff_Bundle</div>
<div class="cb" style="left:1px;top:113.50px"></div>
<svg style="left:2.3px;top:114.30px" width="7" height="7" viewBox="0 0 7 7"><path d="M0.6 3l2 2.2 3.6-4.2" fill="none" stroke="#000" stroke-width="1.7"></path></svg>
<div class="li" style="left:12px;top:112.80px">Cockpit_Lights</div>
<div class="cb" style="left:1px;top:124.75px"></div>
<svg style="left:2.3px;top:125.55px" width="7" height="7" viewBox="0 0 7 7"><path d="M0.6 3l2 2.2 3.6-4.2" fill="none" stroke="#000" stroke-width="1.7"></path></svg>
<div class="li" style="left:12px;top:124.05px">Continious_Chaff_and_Flare</div>
<div class="cb" style="left:1px;top:136.00px"></div>
<svg style="left:2.3px;top:136.80px" width="7" height="7" viewBox="0 0 7 7"><path d="M0.6 3l2 2.2 3.6-4.2" fill="none" stroke="#000" stroke-width="1.7"></path></svg>
<div class="li" style="left:12px;top:135.30px">Cycle_Waypoints</div>
<div class="cb" style="left:1px;top:147.25px"></div>
<svg style="left:2.3px;top:148.05px" width="7" height="7" viewBox="0 0 7 7"><path d="M0.6 3l2 2.2 3.6-4.2" fill="none" stroke="#000" stroke-width="1.7"></path></svg>
<div class="li" style="left:12px;top:146.55px">Cycle_Weapons</div>
<div class="cb" style="left:1px;top:158.50px"></div>
<svg style="left:2.3px;top:159.30px" width="7" height="7" viewBox="0 0 7 7"><path d="M0.6 3l2 2.2 3.6-4.2" fill="none" stroke="#000" stroke-width="1.7"></path></svg>
<div class="li" style="left:12px;top:157.80px">Decrease_MFD_Zoom</div>
<div class="cb" style="left:1px;top:169.75px"></div>
<svg style="left:2.3px;top:170.55px" width="7" height="7" viewBox="0 0 7 7"><path d="M0.6 3l2 2.2 3.6-4.2" fill="none" stroke="#000" stroke-width="1.7"></path></svg>
<div class="li" style="left:12px;top:169.05px">Decrease_Target_Size/Gunp</div>
<div class="cb" style="left:1px;top:181.00px"></div>
<svg style="left:2.3px;top:181.80px" width="7" height="7" viewBox="0 0 7 7"><path d="M0.6 3l2 2.2 3.6-4.2" fill="none" stroke="#000" stroke-width="1.7"></path></svg>
<div class="li" style="left:12px;top:180.30px">Disengage_AutoPilot</div>
<div class="cb" style="left:1px;top:192.25px"></div>
<svg style="left:2.3px;top:193.05px" width="7" height="7" viewBox="0 0 7 7"><path d="M0.6 3l2 2.2 3.6-4.2" fill="none" stroke="#000" stroke-width="1.7"></path></svg>
<div class="li" style="left:12px;top:191.55px">Drogue_Chute</div>
<div class="cb" style="left:1px;top:203.50px"></div>
<svg style="left:2.3px;top:204.30px" width="7" height="7" viewBox="0 0 7 7"><path d="M0.6 3l2 2.2 3.6-4.2" fill="none" stroke="#000" stroke-width="1.7"></path></svg>
<div class="li" style="left:12px;top:202.80px">E.C.M.</div>
<div class="cb" style="left:1px;top:214.75px"></div>
<svg style="left:2.3px;top:215.55px" width="7" height="7" viewBox="0 0 7 7"><path d="M0.6 3l2 2.2 3.6-4.2" fill="none" stroke="#000" stroke-width="1.7"></path></svg>
<div class="li" style="left:12px;top:214.05px">Eject</div>
<div class="cb" style="left:1px;top:226.00px"></div>
<svg style="left:2.3px;top:226.80px" width="7" height="7" viewBox="0 0 7 7"><path d="M0.6 3l2 2.2 3.6-4.2" fill="none" stroke="#000" stroke-width="1.7"></path></svg>
<div class="li" style="left:12px;top:225.30px">Electrical_Power</div>
<div class="cb" style="left:1px;top:237.25px"></div>
<svg style="left:2.3px;top:238.05px" width="7" height="7" viewBox="0 0 7 7"><path d="M0.6 3l2 2.2 3.6-4.2" fill="none" stroke="#000" stroke-width="1.7"></path></svg>
<div class="li" style="left:12px;top:236.55px">Fire_Selected_Weapon</div>
<div class="cb" style="left:1px;top:248.50px"></div>
<svg style="left:2.3px;top:249.30px" width="7" height="7" viewBox="0 0 7 7"><path d="M0.6 3l2 2.2 3.6-4.2" fill="none" stroke="#000" stroke-width="1.7"></path></svg>
<div class="li" style="left:12px;top:247.80px">Flaps_and_Airbrake</div>
<div class="cb" style="left:1px;top:259.75px"></div>
<svg style="left:2.3px;top:260.55px" width="7" height="7" viewBox="0 0 7 7"><path d="M0.6 3l2 2.2 3.6-4.2" fill="none" stroke="#000" stroke-width="1.7"></path></svg>
<div class="li" style="left:12px;top:259.05px">Flaps_Take-Off</div>
<div class="cb" style="left:1px;top:271.00px"></div>
<svg style="left:2.3px;top:271.80px" width="7" height="7" viewBox="0 0 7 7"><path d="M0.6 3l2 2.2 3.6-4.2" fill="none" stroke="#000" stroke-width="1.7"></path></svg>
<div class="li" style="left:12px;top:270.30px">Flaps_Up</div>
<div class="cb" style="left:1px;top:282.25px"></div>
<svg style="left:2.3px;top:283.05px" width="7" height="7" viewBox="0 0 7 7"><path d="M0.6 3l2 2.2 3.6-4.2" fill="none" stroke="#000" stroke-width="1.7"></path></svg>
<div class="li" style="left:12px;top:281.55px">Flare_Bundle</div>
<div class="cb" style="left:1px;top:293.50px"></div>
<svg style="left:2.3px;top:294.30px" width="7" height="7" viewBox="0 0 7 7"><path d="M0.6 3l2 2.2 3.6-4.2" fill="none" stroke="#000" stroke-width="1.7"></path></svg>
<div class="li" style="left:12px;top:292.80px">Gear_Lights</div>
<div class="cb" style="left:1px;top:304.75px"></div>
<svg style="left:2.3px;top:305.55px" width="7" height="7" viewBox="0 0 7 7"><path d="M0.6 3l2 2.2 3.6-4.2" fill="none" stroke="#000" stroke-width="1.7"></path></svg>
<div class="li" style="left:12px;top:304.05px">Gear_Up</div>
<div class="cb" style="left:1px;top:316.00px"></div>
<svg style="left:2.3px;top:316.80px" width="7" height="7" viewBox="0 0 7 7"><path d="M0.6 3l2 2.2 3.6-4.2" fill="none" stroke="#000" stroke-width="1.7"></path></svg>
<div class="li" style="left:12px;top:315.30px">HUD_Colour</div>
<div class="cb" style="left:1px;top:327.25px"></div>
<svg style="left:2.3px;top:328.05px" width="7" height="7" viewBox="0 0 7 7"><path d="M0.6 3l2 2.2 3.6-4.2" fill="none" stroke="#000" stroke-width="1.7"></path></svg>
<div class="li" style="left:12px;top:326.55px">HUD_Designator_Down</div>
<div class="cb" style="left:1px;top:338.50px"></div>
<svg style="left:2.3px;top:339.30px" width="7" height="7" viewBox="0 0 7 7"><path d="M0.6 3l2 2.2 3.6-4.2" fill="none" stroke="#000" stroke-width="1.7"></path></svg>
<div class="li" style="left:12px;top:337.80px">HUD_Designator_Left</div>
<div class="cb" style="left:1px;top:349.75px"></div>
<svg style="left:2.3px;top:350.55px" width="7" height="7" viewBox="0 0 7 7"><path d="M0.6 3l2 2.2 3.6-4.2" fill="none" stroke="#000" stroke-width="1.7"></path></svg>
<div class="li" style="left:12px;top:349.05px">HUD_Designator_Right</div>
<div class="cb" style="left:1px;top:361.00px"></div>
<svg style="left:2.3px;top:361.80px" width="7" height="7" viewBox="0 0 7 7"><path d="M0.6 3l2 2.2 3.6-4.2" fill="none" stroke="#000" stroke-width="1.7"></path></svg>
<div class="li" style="left:12px;top:360.30px">HUD_Designator_Up</div>
<div class="cb" style="left:1px;top:372.25px"></div>
<svg style="left:2.3px;top:373.05px" width="7" height="7" viewBox="0 0 7 7"><path d="M0.6 3l2 2.2 3.6-4.2" fill="none" stroke="#000" stroke-width="1.7"></path></svg>
<div class="li" style="left:12px;top:371.55px">I/R_Jammer</div>
<div class="cb" style="left:1px;top:383.50px"></div>
<svg style="left:2.3px;top:384.30px" width="7" height="7" viewBox="0 0 7 7"><path d="M0.6 3l2 2.2 3.6-4.2" fill="none" stroke="#000" stroke-width="1.7"></path></svg>
<div class="li" style="left:12px;top:382.80px">Increase_MFD_Zoom</div>
<div class="cb" style="left:1px;top:394.75px"></div>
<svg style="left:2.3px;top:395.55px" width="7" height="7" viewBox="0 0 7 7"><path d="M0.6 3l2 2.2 3.6-4.2" fill="none" stroke="#000" stroke-width="1.7"></path></svg>
<div class="li" style="left:12px;top:394.05px">Increase_Target_Size/Gunpc</div>
<div class="cb" style="left:1px;top:406.00px"></div>
<svg style="left:2.3px;top:406.80px" width="7" height="7" viewBox="0 0 7 7"><path d="M0.6 3l2 2.2 3.6-4.2" fill="none" stroke="#000" stroke-width="1.7"></path></svg>
<div class="li" style="left:12px;top:405.30px">Jettison_Fuel_Tanks</div>
<div class="cb" style="left:1px;top:417.25px"></div>
<svg style="left:2.3px;top:418.05px" width="7" height="7" viewBox="0 0 7 7"><path d="M0.6 3l2 2.2 3.6-4.2" fill="none" stroke="#000" stroke-width="1.7"></path></svg>
<div class="li" style="left:12px;top:416.55px">Jettison_Weapons</div>
<div class="cb" style="left:1px;top:428.50px"></div>
<svg style="left:2.3px;top:429.30px" width="7" height="7" viewBox="0 0 7 7"><path d="M0.6 3l2 2.2 3.6-4.2" fill="none" stroke="#000" stroke-width="1.7"></path></svg>
<div class="li" style="left:12px;top:427.80px">Landing_Configuration</div>
<div class="cb" style="left:1px;top:439.75px"></div>
<svg style="left:2.3px;top:440.55px" width="7" height="7" viewBox="0 0 7 7"><path d="M0.6 3l2 2.2 3.6-4.2" fill="none" stroke="#000" stroke-width="1.7"></path></svg>
<div class="li" style="left:12px;top:439.05px">Laser_Rangefinder</div>
<div class="cb" style="left:1px;top:451.00px"></div>
<svg style="left:2.3px;top:451.80px" width="7" height="7" viewBox="0 0 7 7"><path d="M0.6 3l2 2.2 3.6-4.2" fill="none" stroke="#000" stroke-width="1.7"></path></svg>
<div class="li" style="left:12px;top:450.30px">Left_Engine_Spool</div>
<div class="cb" style="left:1px;top:462.25px"></div>
<svg style="left:2.3px;top:463.05px" width="7" height="7" viewBox="0 0 7 7"><path d="M0.6 3l2 2.2 3.6-4.2" fill="none" stroke="#000" stroke-width="1.7"></path></svg>
<div class="li" style="left:12px;top:461.55px">Left_Engine_Stop</div>
<div class="cb" style="left:1px;top:473.50px"></div>
<svg style="left:2.3px;top:474.30px" width="7" height="7" viewBox="0 0 7 7"><path d="M0.6 3l2 2.2 3.6-4.2" fill="none" stroke="#000" stroke-width="1.7"></path></svg>
<div class="li" style="left:12px;top:472.80px">Lock_Target</div>
<div class="cb" style="left:1px;top:484.75px"></div>
<svg style="left:2.3px;top:485.55px" width="7" height="7" viewBox="0 0 7 7"><path d="M0.6 3l2 2.2 3.6-4.2" fill="none" stroke="#000" stroke-width="1.7"></path></svg>
<div class="li" style="left:12px;top:484.05px">Mercury_LLTV_Pod</div>
<div class="cb" style="left:1px;top:496.00px"></div>
<svg style="left:2.3px;top:496.80px" width="7" height="7" viewBox="0 0 7 7"><path d="M0.6 3l2 2.2 3.6-4.2" fill="none" stroke="#000" stroke-width="1.7"></path></svg>
<div class="li" style="left:12px;top:495.30px">Navigation_Lights</div>
<div class="cb" style="left:1px;top:507.25px"></div>
<svg style="left:2.3px;top:508.05px" width="7" height="7" viewBox="0 0 7 7"><path d="M0.6 3l2 2.2 3.6-4.2" fill="none" stroke="#000" stroke-width="1.7"></path></svg>
<div class="li" style="left:12px;top:506.55px">Navigation_Mode</div>
</div>
<div style="left:124.4px;top:105.4px;width:11px;height:11.8px;background:linear-gradient(#ffffff,#ececf4 60%,#d6d6e2);border:1px solid #a4a4b4;border-radius:2px"></div>
<svg style="left:126.4px;top:108.80000000000001px" width="7" height="5" viewBox="0 0 7 5"><path d="M0.7 4l2.8-3 2.8 3" fill="none" stroke="#111" stroke-width="1.6"></path></svg>
<div style="left:124.4px;top:117.4px;width:10.8px;height:349px;background:linear-gradient(90deg,#ffffff,#e4e4ee 40%,#c2c2d4);border:1px solid #9c9cb0;border-radius:2px"></div>
<div style="left:127.4px;top:288.9px;width:4.800000000000001px;height:1px;background:#8a8a9c"></div>
<div style="left:127.4px;top:290.9px;width:4.800000000000001px;height:1px;background:#8a8a9c"></div>
<div style="left:127.4px;top:292.9px;width:4.800000000000001px;height:1px;background:#8a8a9c"></div>
<div style="left:124.2px;top:607.4px;width:11.2px;height:12.4px;background:linear-gradient(#ffffff,#ececf4 60%,#d6d6e2);border:1px solid #a4a4b4;border-radius:2px"></div>
<svg style="left:126.3px;top:611.1px" width="7" height="5" viewBox="0 0 7 5"><path d="M0.7 1l2.8 3 2.8-3" fill="none" stroke="#111" stroke-width="1.6"></path></svg>
<div class="btn" style="left:7px;top:623px;width:18px;height:15px;">/U</div>
<div class="btn" style="left:28px;top:623px;width:19px;height:15px;">/M</div>
<div class="btn" style="left:49.5px;top:623px;width:18px;height:15px;">/D</div>
<div class="btn" style="left:71px;top:623px;width:15px;height:15px;">/I</div>
<div class="btn" style="left:88.5px;top:623px;width:15px;height:15px;">/O</div>
<div class="btn" style="left:106.5px;top:623px;width:27px;height:15px;">RPT</div>
<div class="btn" style="left:7px;top:639.5px;width:18px;height:15px;">/P</div>
<div class="btn" style="left:28px;top:639.5px;width:19px;height:15px;">/R</div>
<div class="btn" style="left:49.5px;top:639.5px;width:18px;height:15px;">/T</div>
<div class="btn" style="left:71px;top:639.5px;width:15px;height:15px;">/A</div>
<div class="btn" style="left:88.5px;top:639.5px;width:15px;height:15px;">/H</div>
<div class="btn" style="left:106.5px;top:639.5px;width:27px;height:15px;">DLY</div>
<div style="left:143px;top:74.4px;width:61px;height:16.6px;background:#ebebef;border-left:1px solid #f8f8f8;border-right:1.4px solid #3c3c44"></div>
<div style="left:146.1px;top:75.2px;width:12px;height:11.8px;background:linear-gradient(170deg,#9a9aac,#c2c2d0 50%,#e2e2ea)"></div>
<svg style="left:146.1px;top:75.2px" width="12" height="11.800" viewBox="0 0 12 11.800"><path d="M3.600 0.800l1.800 0.600 1.400 3.200 4.200 2.400-0.200 1-2.800 0.600-0.800 2.400-1.600-0.800-4.600-1.600 0.200-1.200 3.600-2.200z" fill="#1e1a4a"></path></svg>
<div class="t" style="left: 163.7px; top: 77.3px; font-size: 9.1px; color: rgb(17, 17, 17); letter-spacing: -0.1px; transform: scaleX(0.8606); transform-origin: 0px 0px;">T-Frog.tmj</div>
<div style="left:204.6px;top:75.6px;width:46.4px;height:15px;background:#e2e2e6;border:1px solid #f6f6f8;border-right:1.2px solid #3c3c44;border-bottom:none"></div>
<div class="t" style="left: 207.8px; top: 78.3px; font-size: 9px; color: rgb(17, 17, 17); letter-spacing: -0.1px; transform: scaleX(0.8791); transform-origin: 0px 0px;">T-Frog.tmm</div>
<div style="left:251px;top:89.4px;width:829px;height:1.2px;background:#f6f6f8"></div>
<div style="left:142.9px;top:90.6px;width:464.6px;height:566.6px;background:#fffbe2;border-top:1.4px solid #4c4c54;border-left:1.4px solid #4a4a4e;border-right:1px solid #c4c4cc"></div>
<div style="left:594px;top:91.6px;width:12.5px;height:565.6px;background:#f7f7fc"></div>
<div style="left:595px;top:92.5px;width:11.5px;height:11.8px;background:linear-gradient(#ffffff,#ececf4 60%,#d6d6e2);border:1px solid #a4a4b4;border-radius:2px"></div>
<svg style="left:597.25px;top:95.9px" width="7" height="5" viewBox="0 0 7 5"><path d="M0.7 4l2.8-3 2.8 3" fill="none" stroke="#111" stroke-width="1.6"></path></svg>
<div style="left:595px;top:142px;width:11.3px;height:154px;background:linear-gradient(90deg,#ffffff,#e4e4ee 40%,#c2c2d4);border:1px solid #9c9cb0;border-radius:2px"></div>
<div style="left:598px;top:216.0px;width:5.300000000000001px;height:1px;background:#8a8a9c"></div>
<div style="left:598px;top:218.0px;width:5.300000000000001px;height:1px;background:#8a8a9c"></div>
<div style="left:598px;top:220.0px;width:5.300000000000001px;height:1px;background:#8a8a9c"></div>
<div style="left:595px;top:644.5px;width:11.5px;height:12px;background:linear-gradient(#ffffff,#ececf4 60%,#d6d6e2);border:1px solid #a4a4b4;border-radius:2px"></div>
<svg style="left:597.25px;top:648.0px" width="7" height="5" viewBox="0 0 7 5"><path d="M0.7 1l2.8 3 2.8-3" fill="none" stroke="#111" stroke-width="1.6"></path></svg>
<div class="ed u" style="left: 159.4px; top: 105.81px; letter-spacing: -0.1px; transform: scaleX(0.8841); transform-origin: 0px 0px;">USE MDEF</div>
<div class="ed" style="left: 199.6px; top: 105.81px; letter-spacing: -0.1px; transform: scaleX(0.9682); transform-origin: 0px 0px;">T-Frog.tmm</div>
<div class="ed u" style="left: 159.4px; top: 126.77px; letter-spacing: -0.1px; transform: scaleX(0.9336); transform-origin: 0px 0px;">USE AXES_CONFIG</div>
<div class="ed" style="left: 233px; top: 126.77px; letter-spacing: 0.139px;">(1, </div>
<div class="ed u" style="left: 245.4px; top: 126.77px; letter-spacing: -0.1px; transform: scaleX(0.8909); transform-origin: 0px 0px;">JOYX</div>
<div class="ed" style="left: 264.1px; top: 126.77px; letter-spacing: 0.45px; transform: scaleX(1.0243); transform-origin: 0px 0px;">), (2, </div>
<div class="ed u" style="left: 286.9px; top: 126.77px; letter-spacing: -0.1px; transform: scaleX(0.8909); transform-origin: 0px 0px;">JOYY</div>
<div class="ed" style="left: 305.6px; top: 126.77px; letter-spacing: 0.356px;">), (3, </div>
<div class="ed u" style="left: 327.2px; top: 126.77px; letter-spacing: -0.1px; transform: scaleX(0.7502); transform-origin: 0px 0px;">THR</div>
<div class="ed" style="left: 339.6px; top: 126.77px; letter-spacing: 0.45px;">), (4, </div>
<div class="ed u" style="left: 361.9px; top: 126.77px; letter-spacing: -0.1px; transform: scaleX(0.7714); transform-origin: 0px 0px;">ANT</div>
<div class="ed" style="left: 374.3px; top: 126.77px; letter-spacing: 0.409px;">), (5,</div>
<div class="ed u" style="left: 393.6px; top: 126.77px; letter-spacing: -0.1px; transform: scaleX(0.7596); transform-origin: 0px 0px;">RNG</div>
<div class="ed" style="left: 407.2px; top: 126.77px; letter-spacing: 0.343px;">), (6,</div>
<div class="ed u" style="left: 426.1px; top: 126.77px; letter-spacing: -0.1px; transform: scaleX(0.8686); transform-origin: 0px 0px;">RDDR</div>
<div class="ed" style="left: 447.2px; top: 126.77px; letter-spacing: -0.1px; transform: scaleX(0.8351); transform-origin: 0px 0px;">)</div>
<div class="ed g" style="left: 159.6px; top: 158.21px; letter-spacing: -0.1px; transform: scaleX(0.9002); transform-origin: 0px 0px;">Rem</div>
<div class="ed g ds" style="left: 178.1px; top: 158.21px; letter-spacing: 0.247px;">----------------------------------</div>
<div class="ed g" style="left: 159.6px; top: 179.17px; letter-spacing: -0.1px; transform: scaleX(0.9002); transform-origin: 0px 0px;">Rem</div>
<div class="ed g ds" style="left: 178.1px; top: 179.17px; letter-spacing: 0.247px;">----------------------------------</div>
<div class="ed g" style="left: 159.6px; top: 168.69px; letter-spacing: -0.1px; transform: scaleX(0.9002); transform-origin: 0px 0px;">Rem</div>
<div class="ed g" style="left: 200px; top: 168.69px; letter-spacing: -0.1px; transform: scaleX(0.9311); transform-origin: 0px 0px;">FLIGHT - STICK</div>
<div class="ed b" style="left: 159.7px; top: 210.61px; letter-spacing: -0.1px; transform: scaleX(0.9155); transform-origin: 0px 0px;">BTN S1</div>
<div class="ed r" style="left: 188.7px; top: 210.61px; letter-spacing: -0.1px; transform: scaleX(0.9139); transform-origin: 0px 0px;">/U</div>
<div class="ed" style="left: 198.3px; top: 210.61px; letter-spacing: 0.037px;">Flaps_Take-Off</div>
<div class="ed r" style="left: 188.8px; top: 221.09px; letter-spacing: -0.1px; transform: scaleX(0.9204); transform-origin: 0px 0px;">/M</div>
<div class="ed r" style="left: 188.8px; top: 231.57px; letter-spacing: -0.1px; transform: scaleX(0.8764); transform-origin: 0px 0px;">/D</div>
<div class="ed r" style="left: 198.3px; top: 231.57px; letter-spacing: -0.1px; transform: scaleX(0.8481); transform-origin: 0px 0px;">/I</div>
<div class="ed" style="left: 204.7px; top: 231.57px; letter-spacing: -0.1px; transform: scaleX(0.9571); transform-origin: 0px 0px;">ARM_Aiming_ETS</div>
<div class="ed r" style="left: 198px; top: 242.05px; letter-spacing: -0.1px; transform: scaleX(0.9224); transform-origin: 0px 0px;">/O</div>
<div class="ed" style="left: 208px; top: 242.05px; letter-spacing: -0.039px;">Laser_Rangefinder</div>
<div class="ed b" style="left: 159.7px; top: 263.01px; letter-spacing: -0.1px; transform: scaleX(0.9155); transform-origin: 0px 0px;">BTN S2</div>
<div class="ed r" style="left: 188.7px; top: 263.01px; letter-spacing: -0.1px; transform: scaleX(0.9139); transform-origin: 0px 0px;">/U</div>
<div class="ed" style="left: 198.3px; top: 263.01px; letter-spacing: -0.1px; transform: scaleX(0.9467); transform-origin: 0px 0px;">HUD_Colour</div>
<div class="ed r" style="left: 188.8px; top: 273.49px; letter-spacing: -0.1px; transform: scaleX(0.9204); transform-origin: 0px 0px;">/M</div>
<div class="ed r" style="left: 188.8px; top: 283.97px; letter-spacing: -0.1px; transform: scaleX(0.8764); transform-origin: 0px 0px;">/D</div>
<div class="ed r" style="left: 198.3px; top: 283.97px; letter-spacing: -0.1px; transform: scaleX(0.8481); transform-origin: 0px 0px;">/I</div>
<div class="ed" style="left: 204.7px; top: 283.97px; letter-spacing: -0.1px; transform: scaleX(0.972); transform-origin: 0px 0px;">Cannon</div>
<div class="ed r" style="left: 198px; top: 294.45px; letter-spacing: -0.1px; transform: scaleX(0.9224); transform-origin: 0px 0px;">/O</div>
<div class="ed" style="left: 208px; top: 294.45px; letter-spacing: -0.059px;">Cycle_Weapons</div>
<div class="ed b" style="left: 159.7px; top: 315.41px; letter-spacing: -0.1px; transform: scaleX(0.9191); transform-origin: 0px 0px;">BTN S4</div>
<div class="ed r" style="left: 188.7px; top: 315.41px; letter-spacing: -0.1px; transform: scaleX(0.8889); transform-origin: 0px 0px;">/U</div>
<div class="ed r" style="left: 198.7px; top: 315.41px; letter-spacing: -0.1px; transform: scaleX(0.8889); transform-origin: 0px 0px;">/H</div>
<div class="ed" style="left: 208px; top: 315.41px; letter-spacing: -0.1px;">Push_to_Talk</div>
<div class="ed r" style="left: 188.8px; top: 325.89px; letter-spacing: -0.1px; transform: scaleX(0.9204); transform-origin: 0px 0px;">/M</div>
<div class="ed r" style="left: 199.2px; top: 325.89px; letter-spacing: -0.1px; transform: scaleX(0.939); transform-origin: 0px 0px;">/H</div>
<div class="ed" style="left: 208.7px; top: 325.89px; letter-spacing: -0.096px;">Push_to_Talk</div>
<div class="ed r" style="left: 188.8px; top: 336.37px; letter-spacing: -0.1px; transform: scaleX(0.8764); transform-origin: 0px 0px;">/D</div>
<div class="ed r" style="left: 198.7px; top: 336.37px; letter-spacing: -0.1px; transform: scaleX(0.8889); transform-origin: 0px 0px;">/H</div>
<div class="ed" style="left: 208px; top: 336.37px; letter-spacing: -0.08px;">Push_to_Talk</div>
<div class="ed b" style="left: 159.7px; top: 357.33px; letter-spacing: -0.1px; transform: scaleX(0.9059); transform-origin: 0px 0px;">BTN H1U</div>
<div class="ed r" style="left: 194.2px; top: 357.33px; letter-spacing: -0.1px; transform: scaleX(0.8263); transform-origin: 0px 0px;">/U</div>
<div class="ed r" style="left: 204.2px; top: 357.33px; letter-spacing: -0.1px; transform: scaleX(0.8889); transform-origin: 0px 0px;">/H</div>
<div class="ed" style="left: 213.7px; top: 357.33px; letter-spacing: -0.1px; transform: scaleX(0.9377); transform-origin: 0px 0px;">Trim_Up</div>
<div class="ed r" style="left: 195.3px; top: 367.81px; letter-spacing: -0.1px; transform: scaleX(0.9428); transform-origin: 0px 0px;">/M</div>
<div class="ed r" style="left: 195.3px; top: 378.29px; letter-spacing: -0.1px; transform: scaleX(0.9014); transform-origin: 0px 0px;">/D</div>
<div class="ed r" style="left: 205.5px; top: 378.29px; letter-spacing: -0.1px; transform: scaleX(0.8764); transform-origin: 0px 0px;">/H</div>
<div class="ed" style="left: 215px; top: 378.29px; letter-spacing: -0.1px; transform: scaleX(0.9476); transform-origin: 0px 0px;">Trim_Up</div>
<div class="ed b" style="left: 159.7px; top: 399.25px; letter-spacing: -0.1px; transform: scaleX(0.9059); transform-origin: 0px 0px;">BTN H1D</div>
<div class="ed r" style="left: 194.2px; top: 399.25px; letter-spacing: -0.1px; transform: scaleX(0.8263); transform-origin: 0px 0px;">/U</div>
<div class="ed r" style="left: 204.2px; top: 399.25px; letter-spacing: -0.1px; transform: scaleX(0.8889); transform-origin: 0px 0px;">/H</div>
<div class="ed" style="left: 213.7px; top: 399.25px; letter-spacing: -0.063px;">Trim_Down</div>
<div class="ed r" style="left: 193.3px; top: 409.73px; letter-spacing: -0.1px; transform: scaleX(0.8979); transform-origin: 0px 0px;">/M</div>
<div class="ed r" style="left: 193.3px; top: 420.21px; letter-spacing: -0.1px; transform: scaleX(0.8764); transform-origin: 0px 0px;">/D</div>
<div class="ed r" style="left: 203.3px; top: 420.21px; letter-spacing: -0.1px; transform: scaleX(0.8764); transform-origin: 0px 0px;">/H</div>
<div class="ed" style="left: 213px; top: 420.21px; letter-spacing: -0.04px;">Trim_Down</div>
<div class="ed b" style="left: 159.7px; top: 441.17px; letter-spacing: -0.1px; transform: scaleX(0.9059); transform-origin: 0px 0px;">BTN H1R</div>
<div class="ed r" style="left: 194.2px; top: 441.17px; letter-spacing: -0.1px; transform: scaleX(0.8263); transform-origin: 0px 0px;">/U</div>
<div class="ed r" style="left: 204.2px; top: 441.17px; letter-spacing: -0.1px; transform: scaleX(0.8889); transform-origin: 0px 0px;">/H</div>
<div class="ed" style="left: 213.7px; top: 441.17px; letter-spacing: -0.1px; transform: scaleX(0.9578); transform-origin: 0px 0px;">Trim_Right</div>
<div class="ed r" style="left: 193.3px; top: 451.65px; letter-spacing: -0.1px; transform: scaleX(0.8979); transform-origin: 0px 0px;">/M</div>
<div class="ed r" style="left: 193.3px; top: 462.13px; letter-spacing: -0.1px; transform: scaleX(0.8764); transform-origin: 0px 0px;">/D</div>
<div class="ed r" style="left: 203.3px; top: 462.13px; letter-spacing: -0.1px; transform: scaleX(0.8764); transform-origin: 0px 0px;">/H</div>
<div class="ed" style="left: 213px; top: 462.13px; letter-spacing: -0.1px; transform: scaleX(0.9552); transform-origin: 0px 0px;">Trim_Right</div>
<div class="ed b" style="left: 159.7px; top: 483.09px; letter-spacing: -0.1px; transform: scaleX(0.919); transform-origin: 0px 0px;">BTN H1L</div>
<div class="ed r" style="left: 193.3px; top: 483.09px; letter-spacing: -0.1px; transform: scaleX(0.8263); transform-origin: 0px 0px;">/U</div>
<div class="ed r" style="left: 203px; top: 483.09px; letter-spacing: -0.1px; transform: scaleX(0.8889); transform-origin: 0px 0px;">/H</div>
<div class="ed" style="left: 213px; top: 483.09px; letter-spacing: -0.1px; transform: scaleX(0.9946); transform-origin: 0px 0px;">Trim_Left</div>
<div class="ed r" style="left: 193.3px; top: 493.57px; letter-spacing: -0.1px; transform: scaleX(0.8979); transform-origin: 0px 0px;">/M</div>
<div class="ed r" style="left: 193.3px; top: 504.05px; letter-spacing: -0.1px; transform: scaleX(0.8764); transform-origin: 0px 0px;">/D</div>
<div class="ed r" style="left: 203.3px; top: 504.05px; letter-spacing: -0.1px; transform: scaleX(0.8764); transform-origin: 0px 0px;">/H</div>
<div class="ed" style="left: 213px; top: 504.05px; letter-spacing: -0.1px; transform: scaleX(0.9946); transform-origin: 0px 0px;">Trim_Left</div>
<div class="ed b" style="left: 159.7px; top: 525.01px; letter-spacing: -0.1px; transform: scaleX(0.9059); transform-origin: 0px 0px;">BTN H2U</div>
<div class="ed r" style="left: 194.2px; top: 525.01px; letter-spacing: -0.1px; transform: scaleX(0.8263); transform-origin: 0px 0px;">/U</div>
<div class="ed" style="left: 203.7px; top: 525.01px; letter-spacing: -0.1px; transform: scaleX(0.992); transform-origin: 0px 0px;">Canopy_Close</div>
<div class="ed r" style="left: 193.3px; top: 535.49px; letter-spacing: -0.1px; transform: scaleX(0.8979); transform-origin: 0px 0px;">/M</div>
<div class="ed r" style="left: 193.3px; top: 545.97px; letter-spacing: -0.1px; transform: scaleX(0.8388); transform-origin: 0px 0px;">/D</div>
<div class="ed" style="left: 203px; top: 545.97px; letter-spacing: -0.094px;">Transition_to_Level_Flight</div>
<div class="ed b" style="left: 159.7px; top: 566.93px; letter-spacing: -0.1px; transform: scaleX(0.9059); transform-origin: 0px 0px;">BTN H2D</div>
<div class="ed r" style="left: 194.2px; top: 566.93px; letter-spacing: -0.1px; transform: scaleX(0.8263); transform-origin: 0px 0px;">/U</div>
<div class="ed" style="left: 203.7px; top: 566.93px; letter-spacing: -0.1px;">Cockpit_Lights</div>
<div class="ed r" style="left: 193.3px; top: 577.41px; letter-spacing: -0.1px; transform: scaleX(0.8979); transform-origin: 0px 0px;">/M</div>
<div class="ed r" style="left: 193.3px; top: 587.89px; letter-spacing: -0.1px; transform: scaleX(0.8388); transform-origin: 0px 0px;">/D</div>
<div class="ed" style="left: 202.5px; top: 587.89px; letter-spacing: -0.1px;">Disengage_AutoPilot</div>
<div class="ed b" style="left: 159.7px; top: 608.85px; letter-spacing: -0.1px; transform: scaleX(0.9059); transform-origin: 0px 0px;">BTN H2R</div>
<div class="ed r" style="left: 194.2px; top: 608.85px; letter-spacing: -0.1px; transform: scaleX(0.8263); transform-origin: 0px 0px;">/U</div>
<div class="ed" style="left: 203.7px; top: 608.85px; letter-spacing: -0.1px; transform: scaleX(0.9938); transform-origin: 0px 0px;">Navigation_Lights</div>
<div class="ed r" style="left: 193.3px; top: 619.33px; letter-spacing: -0.1px; transform: scaleX(0.8979); transform-origin: 0px 0px;">/M</div>
<div class="ed r" style="left: 193.3px; top: 629.81px; letter-spacing: -0.1px; transform: scaleX(0.8388); transform-origin: 0px 0px;">/D</div>
<div class="ed" style="left: 203px; top: 629.81px; letter-spacing: -0.077px;">Auto_Bombs_Release</div>
<div style="left:145px;top:640px;width:451px;height:16.6px;overflow:hidden">
<div class="ed b" style="left: 14.7px; top: 10.77px; letter-spacing: -0.1px; transform: scaleX(0.919); transform-origin: 0px 0px;">BTN H2L</div>
<div class="ed r" style="left: 48.3px; top: 10.77px; letter-spacing: -0.1px; transform: scaleX(0.8388); transform-origin: 0px 0px;">/U</div>
<div class="ed " style="left: 58px; top: 10.77px; letter-spacing: -0.046px;">Gear_Lights</div>
</div>
<div style="left:611px;top:90.6px;width:466.7px;height:566.6px;background:#e2fcfd;border-top:1.4px solid #4c4c54;border-left:2px solid #5e585e;border-right:1px solid #686870"></div>
<div style="left:1063px;top:91.6px;width:13.7px;height:565.6px;background:#f7f7fc"></div>
<div style="left:1063.6px;top:92.5px;width:12.2px;height:11.8px;background:linear-gradient(#ffffff,#ececf4 60%,#d6d6e2);border:1px solid #a4a4b4;border-radius:2px"></div>
<svg style="left:1066.1999999999998px;top:95.9px" width="7" height="5" viewBox="0 0 7 5"><path d="M0.7 4l2.8-3 2.8 3" fill="none" stroke="#111" stroke-width="1.6"></path></svg>
<div style="left:1063.8px;top:164.3px;width:11.6px;height:223.7px;background:linear-gradient(90deg,#ffffff,#e4e4ee 40%,#c2c2d4);border:1px solid #9c9cb0;border-radius:2px"></div>
<div style="left:1066.8px;top:273.15px;width:5.6px;height:1px;background:#8a8a9c"></div>
<div style="left:1066.8px;top:275.15px;width:5.6px;height:1px;background:#8a8a9c"></div>
<div style="left:1066.8px;top:277.15px;width:5.6px;height:1px;background:#8a8a9c"></div>
<div style="left:1063.6px;top:644.5px;width:12.2px;height:12px;background:linear-gradient(#ffffff,#ececf4 60%,#d6d6e2);border:1px solid #a4a4b4;border-radius:2px"></div>
<svg style="left:1066.1999999999998px;top:648.0px" width="7" height="5" viewBox="0 0 7 5"><path d="M0.7 1l2.8 3 2.8-3" fill="none" stroke="#111" stroke-width="1.6"></path></svg>
<div class="ed g2" style="left: 628px; top: 116.21px; letter-spacing: -0.1px; transform: scaleX(0.9296); transform-origin: 0px 0px;">Rem</div>
<div class="ed g2 ds" style="left: 646.7px; top: 116.21px; letter-spacing: 0.248px;">----------------------------</div>
<div class="ed g2" style="left: 628px; top: 137.18px; letter-spacing: -0.1px; transform: scaleX(0.9296); transform-origin: 0px 0px;">Rem</div>
<div class="ed g2 ds" style="left: 646.7px; top: 137.18px; letter-spacing: 0.248px;">----------------------------</div>
<div class="ed g2" style="left: 628px; top: 126.69px; letter-spacing: -0.1px; transform: scaleX(0.9296); transform-origin: 0px 0px;">Rem</div>
<div class="ed g2" style="left: 669.2px; top: 126.69px; letter-spacing: 0.057px;">Avionics</div>
<div class="ed" style="left: 628px; top: 158.15px; letter-spacing: -0.087px;">Electrical_Power = SHF l</div>
<div class="ed" style="left: 628px; top: 168.63px; letter-spacing: -0.1px; transform: scaleX(0.9907); transform-origin: 0px 0px;">Left_Engine_Spool = ALT HOME</div>
<div class="ed" style="left: 628px; top: 179.12px; letter-spacing: -0.1px; transform: scaleX(0.9614); transform-origin: 0px 0px;">Right_Engine_Spool = SHF HOME</div>
<div class="ed" style="left: 628px; top: 189.6px; letter-spacing: -0.1px; transform: scaleX(0.9706); transform-origin: 0px 0px;">HUD_Colour = CTL h</div>
<div class="ed" style="left: 628px; top: 200.09px; letter-spacing: -0.087px;">Cockpit_Lights = l</div>
<div class="ed" style="left: 628px; top: 210.57px; letter-spacing: -0.1px;">Canopy_Close = CTL c</div>
<div class="ed" style="left: 628px; top: 221.06px; letter-spacing: -0.099px;">Navigation_Lights = CTL l</div>
<div class="ed" style="left: 628px; top: 231.54px; letter-spacing: 0.024px;">Gear_Lights = ALT l</div>
<div class="ed" style="left: 628px; top: 242.03px; letter-spacing: -0.097px;">Left_Engine_Stop = ALT END</div>
<div class="ed" style="left: 628px; top: 252.51px; letter-spacing: -0.1px; transform: scaleX(0.9635); transform-origin: 0px 0px;">Right_Engine_Stop = SHF END</div>
<div class="ed" style="left: 628px; top: 263px; letter-spacing: -0.08px;">Reset_Audible_Warning = SHF n</div>
<div class="ed g2" style="left: 628px; top: 304.94px; letter-spacing: -0.1px; transform: scaleX(0.9296); transform-origin: 0px 0px;">Rem</div>
<div class="ed g2 ds" style="left: 646.7px; top: 304.94px; letter-spacing: 0.259px;">-----------------------------------</div>
<div class="ed g2" style="left: 628px; top: 325.91px; letter-spacing: -0.1px; transform: scaleX(0.9296); transform-origin: 0px 0px;">Rem</div>
<div class="ed g2 ds" style="left: 646.7px; top: 325.91px; letter-spacing: 0.259px;">-----------------------------------</div>
<div class="ed g2" style="left: 628px; top: 315.42px; letter-spacing: -0.1px; transform: scaleX(0.9296); transform-origin: 0px 0px;">Rem</div>
<div class="ed g2" style="left: 668.7px; top: 315.42px; letter-spacing: -0.1px; transform: scaleX(0.9318); transform-origin: 0px 0px;">FLIGHT CONTROLS</div>
<div class="ed" style="left: 628px; top: 346.88px; letter-spacing: -0.015px;">Flaps_Take-Off = SHF f</div>
<div class="ed" style="left: 628px; top: 357.36px; letter-spacing: -0.083px;">Gear_Up = g</div>
<div class="ed" style="left: 628px; top: 367.85px; letter-spacing: -0.08px;">Flaps_Up = f</div>
<div class="ed" style="left: 628px; top: 378.33px; letter-spacing: -0.027px;">Wheel_Brake = w</div>
<div class="ed" style="left: 628px; top: 388.82px; letter-spacing: -0.08px;">Landing_Configuration = SHF f g</div>
<div class="ed" style="left: 628px; top: 399.3px; letter-spacing: -0.1px; transform: scaleX(0.9722); transform-origin: 0px 0px;">Trim_Up = UARROW</div>
<div class="ed" style="left: 628px; top: 409.79px; letter-spacing: -0.1px;">Trim_Down = DARROW</div>
<div class="ed" style="left: 628px; top: 420.27px; letter-spacing: -0.1px; transform: scaleX(0.9744); transform-origin: 0px 0px;">Trim_Right = RARROW</div>
<div class="ed" style="left: 628px; top: 430.76px; letter-spacing: -0.097px;">Trim_Left = LARROW</div>
<div class="ed" style="left: 628px; top: 441.24px; letter-spacing: -0.009px;">Flaps_and_Airbrake = f b</div>
<div class="ed" style="left: 628px; top: 451.73px; letter-spacing: -0.013px;">Rudder_Left = z</div>
<div class="ed" style="left: 628px; top: 462.21px; letter-spacing: -0.1px; transform: scaleX(0.9943); transform-origin: 0px 0px;">Rudder_Right = x</div>
<div class="ed" style="left: 628px; top: 472.7px; letter-spacing: -0.031px;">Airbrake = b</div>
<div class="ed" style="left: 628px; top: 483.18px; letter-spacing: 0.45px; transform: scaleX(1.1457); transform-origin: 0px 0px;">w</div>
<div class="ed g2" style="left: 628px; top: 514.64px; letter-spacing: -0.1px; transform: scaleX(0.9296); transform-origin: 0px 0px;">Rem</div>
<div class="ed g2 ds" style="left: 646.7px; top: 514.64px; letter-spacing: 0.243px;">------------------------------</div>
<div class="ed g2" style="left: 628px; top: 535.61px; letter-spacing: -0.1px; transform: scaleX(0.9296); transform-origin: 0px 0px;">Rem</div>
<div class="ed g2 ds" style="left: 646.7px; top: 535.61px; letter-spacing: 0.243px;">------------------------------</div>
<div class="ed g2" style="left: 628px; top: 525.12px; letter-spacing: -0.1px; transform: scaleX(0.9296); transform-origin: 0px 0px;">Rem</div>
<div class="ed g2" style="left: 668.7px; top: 525.12px; letter-spacing: -0.1px; transform: scaleX(0.9859); transform-origin: 0px 0px;">NAVIGATION</div>
<div class="ed" style="left: 628px; top: 556.58px; letter-spacing: -0.1px; transform: scaleX(0.9748); transform-origin: 0px 0px;">Navigation_Mode = 1</div>
<div class="ed" style="left: 628px; top: 567.06px; letter-spacing: -0.032px;">Cycle_Waypoints = `</div>
<div class="ed g2" style="left: 628px; top: 598.52px; letter-spacing: -0.1px; transform: scaleX(0.9296); transform-origin: 0px 0px;">Rem</div>
<div class="ed g2 ds" style="left: 646.7px; top: 598.52px; letter-spacing: 0.244px;">---------------------------</div>
<div class="ed g2" style="left: 628px; top: 619.49px; letter-spacing: -0.1px; transform: scaleX(0.9296); transform-origin: 0px 0px;">Rem</div>
<div class="ed g2 ds" style="left: 646.7px; top: 619.49px; letter-spacing: 0.244px;">---------------------------</div>
<div class="ed g2" style="left: 628px; top: 609px; letter-spacing: -0.1px; transform: scaleX(0.9296); transform-origin: 0px 0px;">Rem</div>
<div class="ed g2" style="left: 669.1px; top: 609px; letter-spacing: -0.1px; transform: scaleX(0.851); transform-origin: 0px 0px;">DEFENCE</div>
<div class="ed" style="left: 628px; top: 640.46px; letter-spacing: -0.092px;">Continious_Chaff_and_Flare = SHF q</div>
<div style="left:613px;top:640px;width:452px;height:16.6px;overflow:hidden">
<div class="ed" style="left: 15px; top: 10.94px; letter-spacing: -0.1px; transform: scaleX(0.9394); transform-origin: 0px 0px;">Flare_Bundle = DEL DEL DEL DEL</div>
</div>
<div style="left:0px;top:657.4px;width:1080px;height:17.6px;background:linear-gradient(#e8e8ec,#dedee2 70%,#d6d6dc);border-top:1px solid #f6f6f8;border-bottom:1.2px solid #84848e"></div>
<svg style="left:1px;top:660px" width="15" height="13" viewBox="0 0 15 13"><rect width="15" height="13" fill="#161616"></rect><path d="M2 12c0-5 2-9 6-10l2 1 1 3 2 2-1 2-3-1-1 3z" fill="#b5561f"></path><path d="M5 8c1-3 2-4 4-5" stroke="#e8c9a0" stroke-width="1.2" fill="none"></path><path d="M10 8l3 2-1 2-3-2z" fill="#f0e0d0"></path></svg>
<div class="t" style="left: 18.6px; top: 661.5px; font-size: 8.5px; color: rgb(17, 17, 17); letter-spacing: -0.1px; transform: scaleX(0.9444); transform-origin: 0px 0px;">Editing T-Frog.tmj</div>
<svg style="left:830px;top:661px" width="13" height="12" viewBox="0 0 13 12"><rect width="13" height="12" fill="#111"></rect><rect x="1" y="1" width="11" height="6" fill="#22a02a"></rect><rect x="2" y="8" width="9" height="1.5" fill="#5fd85f"></rect><rect x="2" y="10" width="6" height="1" fill="#2c8c2c"></rect><rect x="10" y="9" width="2" height="2" fill="#eee"></rect></svg>
<div style="left:847.5px;top:661px;width:39px;height:12.5px;border:1px solid #8a8a94;border-right-color:#fff;border-bottom-color:#fff;background:#ececf0;"></div>
<div class="t" style="left: 849.5px; top: 662px; font-size: 8.5px; line-height: 11px; letter-spacing: -0.1px; transform: scaleX(0.9218); transform-origin: 0px 0px;">Line no: 1</div>
<div style="left:888.7px;top:661px;width:24px;height:12.5px;border:1px solid #8a8a94;border-right-color:#fff;border-bottom-color:#fff;background:#ececf0;"></div>
<div class="t" style="left: 890px; top: 662px; font-size: 8.5px; line-height: 11px; color: rgb(180, 180, 184); text-shadow: rgb(255, 255, 255) 0.7px 0.7px 0px; letter-spacing: -0.1px; transform: scaleX(0.9009); transform-origin: 0px 0px;">CAPS</div>
<div style="left:914.5px;top:661px;width:15.5px;height:12.5px;border:1px solid #8a8a94;border-right-color:#fff;border-bottom-color:#fff;background:#ececf0;"></div>
<div class="t" style="left: 916px; top: 662px; font-size: 8.5px; line-height: 11px; color: rgb(180, 180, 184); text-shadow: rgb(255, 255, 255) 0.7px 0.7px 0px; letter-spacing: -0.1px; transform: scaleX(0.829); transform-origin: 0px 0px;">INS</div>
<div style="left:931px;top:661px;width:19.5px;height:12.5px;border:1px solid #8a8a94;border-right-color:#fff;border-bottom-color:#fff;background:#ececf0;"></div>
<div class="t" style="left: 932.5px; top: 662px; font-size: 8.5px; line-height: 11px; letter-spacing: -0.1px; transform: scaleX(0.8552); transform-origin: 0px 0px;">NUM</div>
<div style="left:952.5px;top:661px;width:25px;height:12.5px;border:1px solid #8a8a94;border-right-color:#fff;border-bottom-color:#fff;background:#ececf0;"></div>
<div class="t" style="left: 954.5px; top: 662px; font-size: 8.5px; line-height: 11px; letter-spacing: -0.1px; transform: scaleX(0.9865); transform-origin: 0px 0px;">23:20</div>
<div style="left:982px;top:661px;width:37px;height:12.5px;border:1px solid #444;background:#c6c6cc;box-shadow:inset 1px 1px 0 #777"></div>
<div class="t" style="left: 984.5px; top: 662px; font-size: 8.5px; line-height: 11px; letter-spacing: -0.1px; transform: scaleX(0.9759); transform-origin: 0px 0px;">Disabled</div>
<div class="t" style="left: 1022.5px; top: 662px; font-size: 8.5px; line-height: 11px; color: rgb(17, 17, 17); letter-spacing: -0.1px; transform: scaleX(0.9436); transform-origin: 0px 0px;">T-Frog.tmm</div>

</body></html>
